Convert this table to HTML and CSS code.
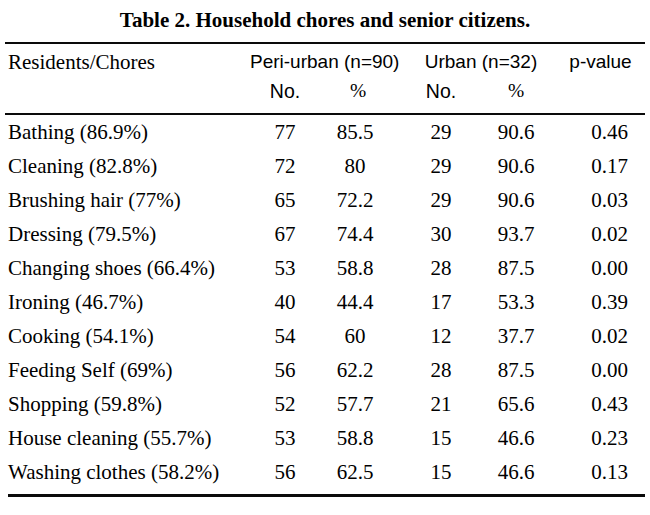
FILE: index.html
```html
<!DOCTYPE html>
<html lang="en">
<head>
<meta charset="utf-8">
<title>Table 2. Household chores and senior citizens.</title>
<link rel="stylesheet" href="styles.css">
</head>
<body>
<div class="page">
  <h1 class="title">Table 2. Household chores and senior citizens.</h1>
  <div class="table">
    <div class="rule rule-top"></div>

    <div class="h1 label">Residents/Chores</div>
    <div class="h1 sans span-peri">Peri-urban (n=90)</div>
    <div class="h1 sans span-urban">Urban (n=32)</div>
    <div class="h1 sans c-pv">p-value</div>

    <div class="h2 sans c-pn">No.</div>
    <div class="h2 c-pp pct">%</div>
    <div class="h2 sans c-un">No.</div>
    <div class="h2 c-up">%</div>

    <div class="rule rule-mid"></div>

    <div class="cell label">Bathing (86.9%)</div><div class="cell c-pn">77</div><div class="cell c-pp">85.5</div><div class="cell c-un">29</div><div class="cell c-up">90.6</div><div class="cell c-pv pv">0.46</div>
    <div class="cell label">Cleaning (82.8%)</div><div class="cell c-pn">72</div><div class="cell c-pp">80</div><div class="cell c-un">29</div><div class="cell c-up">90.6</div><div class="cell c-pv pv">0.17</div>
    <div class="cell label">Brushing hair (77%)</div><div class="cell c-pn">65</div><div class="cell c-pp">72.2</div><div class="cell c-un">29</div><div class="cell c-up">90.6</div><div class="cell c-pv pv">0.03</div>
    <div class="cell label">Dressing (79.5%)</div><div class="cell c-pn">67</div><div class="cell c-pp">74.4</div><div class="cell c-un">30</div><div class="cell c-up">93.7</div><div class="cell c-pv pv">0.02</div>
    <div class="cell label">Changing shoes (66.4%)</div><div class="cell c-pn">53</div><div class="cell c-pp">58.8</div><div class="cell c-un">28</div><div class="cell c-up">87.5</div><div class="cell c-pv pv">0.00</div>
    <div class="cell label">Ironing (46.7%)</div><div class="cell c-pn">40</div><div class="cell c-pp">44.4</div><div class="cell c-un">17</div><div class="cell c-up">53.3</div><div class="cell c-pv pv">0.39</div>
    <div class="cell label">Cooking (54.1%)</div><div class="cell c-pn">54</div><div class="cell c-pp">60</div><div class="cell c-un">12</div><div class="cell c-up">37.7</div><div class="cell c-pv pv">0.02</div>
    <div class="cell label">Feeding Self (69%)</div><div class="cell c-pn">56</div><div class="cell c-pp">62.2</div><div class="cell c-un">28</div><div class="cell c-up">87.5</div><div class="cell c-pv pv">0.00</div>
    <div class="cell label">Shopping (59.8%)</div><div class="cell c-pn">52</div><div class="cell c-pp">57.7</div><div class="cell c-un">21</div><div class="cell c-up">65.6</div><div class="cell c-pv pv">0.43</div>
    <div class="cell label">House cleaning (55.7%)</div><div class="cell c-pn">53</div><div class="cell c-pp">58.8</div><div class="cell c-un">15</div><div class="cell c-up">46.6</div><div class="cell c-pv pv">0.23</div>
    <div class="cell label">Washing clothes (58.2%)</div><div class="cell c-pn">56</div><div class="cell c-pp">62.5</div><div class="cell c-un">15</div><div class="cell c-up">46.6</div><div class="cell c-pv pv">0.13</div>

    <div class="rule rule-bottom"></div>
  </div>
</div>
</body>
</html>
```

FILE: styles.css
```css
html, body {
  margin: 0;
  padding: 0;
  background: #ffffff;
}

.page {
  width: 650px;
  height: 515px;
  padding: 0 5px;
  box-sizing: border-box;
  font-family: "Liberation Serif", "Times New Roman", serif;
  color: #000000;
}

.title {
  margin: 0;
  height: 42px;
  line-height: 40px;
  font-size: 21px;
  font-weight: bold;
  text-align: center;
  white-space: nowrap;
}

.table {
  display: grid;
  grid-template-columns: 245px 70px 70px 16px 70px 80px 1fr;
  align-items: center;
}

.rule {
  grid-column: 1 / -1;
  background: #0a0a0a;
}

.rule-top {
  height: 2px;
}

.rule-mid {
  height: 2px;
}

.rule-bottom {
  height: 3px;
  margin-top: 5px;
  margin-left: 3px;
}

.sans {
  font-family: "Liberation Sans", Arial, sans-serif;
}

.h1 {
  grid-row: 2;
  line-height: 36px;
  font-size: 21px;
  white-space: nowrap;
}

.h1.sans {
  font-size: 19px;
}

.h2 {
  grid-row: 3;
  line-height: 22px;
  padding-bottom: 11px;
  font-size: 19.5px;
  text-align: center;
}

.h2.pct {
  padding-left: 6px;
}

.label {
  grid-column: 1;
  padding-left: 3px;
  text-align: left;
}

.span-peri {
  grid-column: 2 / 4;
  text-align: center;
}

.span-urban {
  grid-column: 5 / 7;
  text-align: center;
}

.c-pn { grid-column: 2; }
.c-pp { grid-column: 3; }
.c-un { grid-column: 5; }
.c-up { grid-column: 6; }
.c-pv {
  grid-column: 7;
  text-align: center;
}

.cell {
  line-height: 34px;
  font-size: 21px;
  text-align: center;
  white-space: nowrap;
}

.cell.label {
  text-align: left;
}

.cell.pv {
  padding-left: 18px;
}
```
